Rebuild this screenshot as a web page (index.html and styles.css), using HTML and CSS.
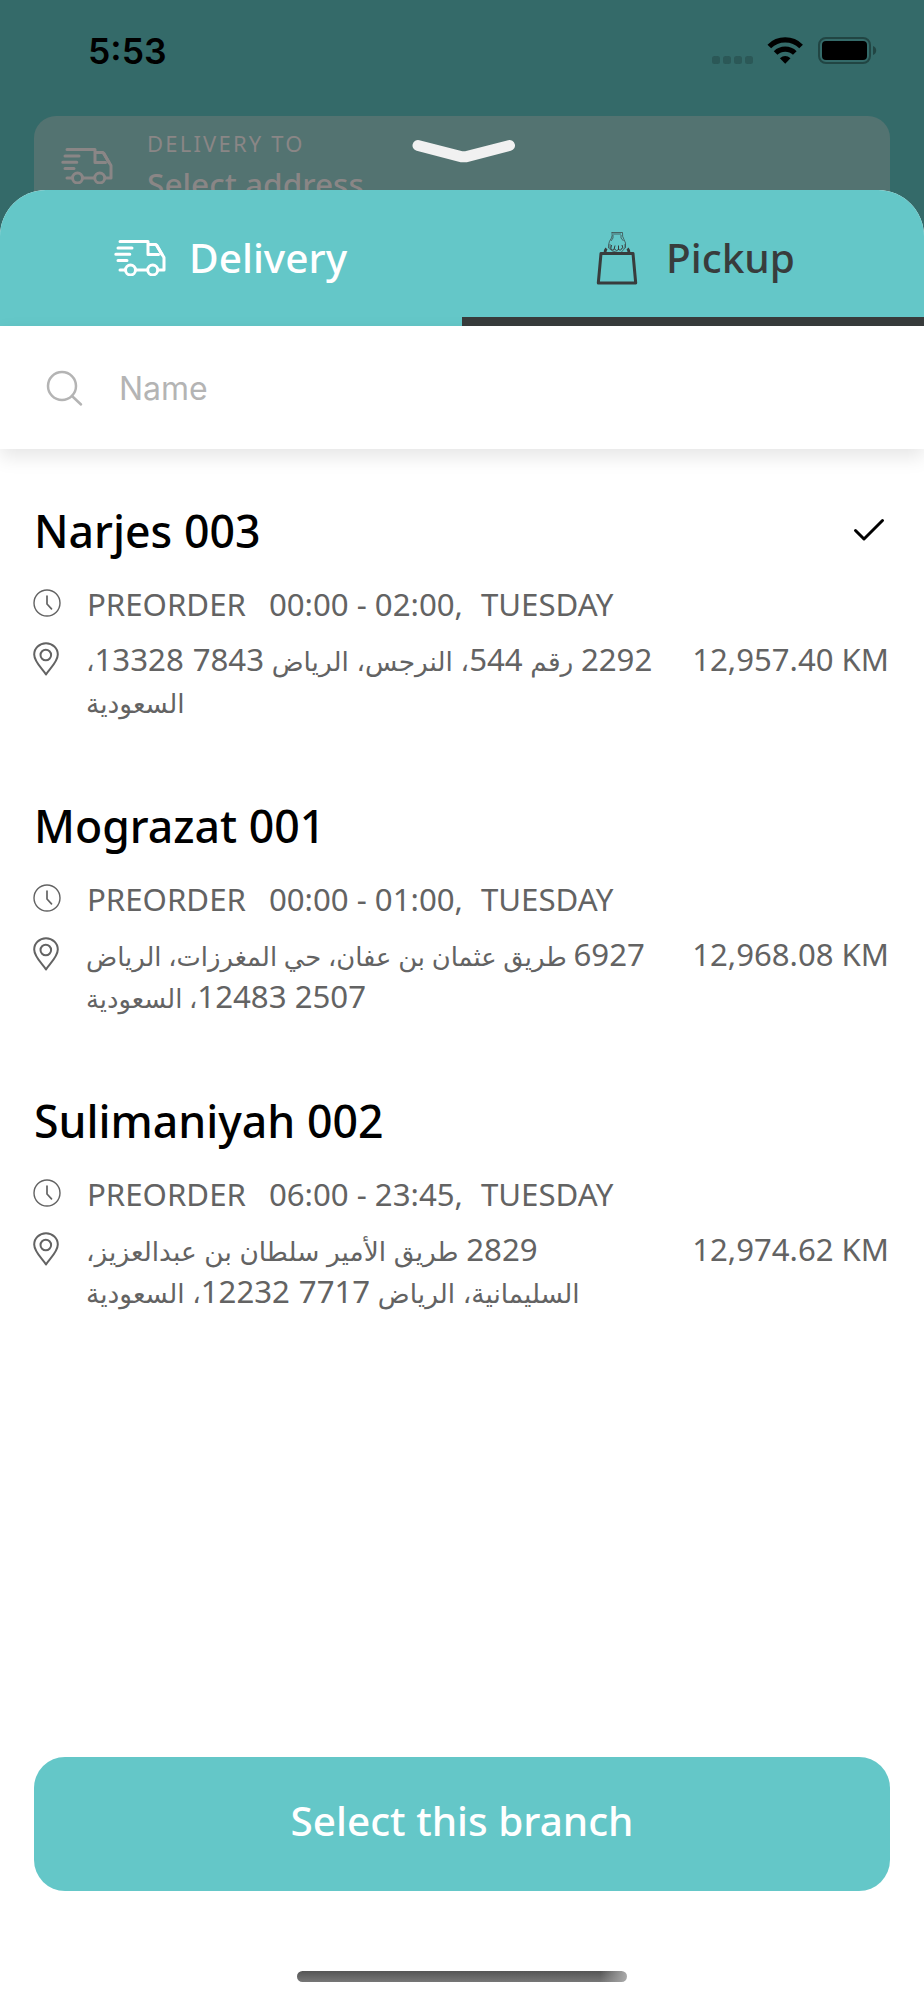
FILE: index.html
```html
<!DOCTYPE html>
<html lang="en">
  <head>
    <meta charset="UTF-8" />
    <meta name="viewport" content="width=device-width, initial-scale=1.0" />
    <title>Select branch</title>
    <link rel="stylesheet" href="styles.css">
  </head>
  <body>
    <svg class="symbols" width="0" height="0">
      <symbol id="truck" viewBox="0 0 52 37">
        <g fill="none" stroke="currentColor" stroke-width="3" stroke-linecap="round" stroke-linejoin="round">
          <path d="M6 2.500h28v13h10.500M34 5.500h8l8 13v12.500h-5M33 31H22M11 31H6M4 9h14M1.800 15.200h14M4 21.600h9" />
          <path d="M43 6.500l5 9" />
          <circle cx="16.500" cy="31" r="5" />
          <circle cx="38.700" cy="31" r="5" />
        </g>
      </symbol>
      <symbol id="clock" viewBox="0 0 28 28">
        <g fill="none" stroke="currentColor" stroke-linecap="round">
          <circle cx="14" cy="14" r="13" stroke-width="1.400" />
          <path d="M14 7v8l4.500 4.800" stroke-width="1.700" />
        </g>
      </symbol>
      <symbol id="pin" viewBox="0 0 26 34">
        <g fill="none" stroke="currentColor" stroke-width="2" stroke-linejoin="round">
          <path d="M13 32.500C10 27.500 1.200 20 1.200 12.500a11.800 11.300 0 0 1 23.600 0C24.800 20 16 27.500 13 32.500z" />
          <circle cx="12.800" cy="13" r="5.300" />
        </g>
      </symbol>
    </svg>

    <div class="screen">
      <div class="backdrop">
        <div class="status-bar">
          <span class="time">5:53</span>
          <svg class="status-icons" width="166" height="30" viewBox="0 0 166 30">
            <g fill="#2b5857">
              <rect x="0" y="20" width="8" height="8" rx="2.500" />
              <rect x="11" y="20" width="8" height="8" rx="2.500" />
              <rect x="22" y="20" width="8" height="8" rx="2.500" />
              <rect x="33" y="20" width="8" height="8" rx="2.500" />
            </g>
            <g fill="none" stroke="#000" stroke-width="5.200">
              <path d="M57.300 10.500a22.600 22.600 0 0 1 31.800 0" />
              <path d="M63.600 17a13.800 13.800 0 0 1 19.200 0" />
            </g>
            <path d="M67.900 22.300q5.300-4.600 10.600 0l-5.300 5.500z" />
            <rect x="107" y="2" width="51" height="25" rx="7" fill="none" stroke="#214543" stroke-width="2" />
            <rect x="110" y="5" width="45" height="19" rx="4" />
            <path d="M161 10q3.200 1.300 3.200 4.500t-3.200 4.500z" fill="#214543" />
          </svg>
        </div>
        <div class="address-card">
          <svg class="truck" width="52" height="37"><use href="#truck" /></svg>
          <div class="address-text">
            <span class="address-label">DELIVERY TO</span>
            <span class="address-value">Select address</span>
          </div>
        </div>
        <svg class="handle" width="104" height="26" viewBox="0 0 104 26">
          <path d="M6 6.500l44 11.300h3.500L97.500 6.500" fill="none" stroke="#f1f1f1" stroke-width="11" stroke-linecap="round" stroke-linejoin="round" />
        </svg>
      </div>

      <div class="sheet">
        <div class="tabs">
          <div class="tab tab-delivery">
            <svg class="truck" width="52" height="37"><use href="#truck" /></svg>
            <span>Delivery</span>
          </div>
          <div class="tab tab-pickup active">
            <svg width="42" height="54" viewBox="0 0 42 54" fill="none" stroke="currentColor">
              <path d="M5 22.500h32l2.700 29.500H2.300z" stroke-width="3" stroke-linejoin="round" />
              <path d="M9 22q0-3 1.500-4.500M33 22q0-3-1.500-4.500" stroke-width="2.800" />
              <path d="M15.500 1.500h11M16 1.500q.5 3-.5 5.500-2.500 3-3 7v3l4 3q5 2 8.500 1.500l4.500-5q.8-5-1.500-8-2-3-1.500-7M17 3h8M14 17v-4M29 17v-4M17 4v3l-2 3M25 4v3l2.500 3" stroke-width=".7" />
              <path d="M15.500 14l-.8 4M19 14.500l-1 4M22.500 14.500v4.500M26 14l1 3.500M15 18q2 2.500 3.500 0 2 3 4 .5 3 1.500 3.500-1.500" stroke-width="1" />
            </svg>
            <span>Pickup</span>
          </div>
        </div>

        <div class="search">
          <svg width="37" height="37" viewBox="0 0 37 37" fill="none" stroke="#b4b4b4" stroke-width="2.500" stroke-linecap="round">
            <circle cx="16" cy="16" r="14" />
            <path d="M26 26l9 8.500" />
          </svg>
          <span>Name</span>
        </div>

        <div class="branches">
          <div class="branch">
            <div class="branch-head">
              <h2>Narjes 003</h2>
              <svg class="check" width="32" height="24" viewBox="0 0 32 24">
                <path d="M2.500 12.500l8.500 8.500L29.500 2.500" fill="none" stroke="#000" stroke-width="3" stroke-linecap="round" stroke-linejoin="round" />
              </svg>
            </div>
            <div class="hours">
              <svg width="28" height="28"><use href="#clock" /></svg>
              <span>PREORDER</span>
              <span class="slot">00:00 - 02:00,</span>
              <span>TUESDAY</span>
            </div>
            <div class="place">
              <svg width="26" height="34"><use href="#pin" /></svg>
              <p class="address loose" dir="rtl"><span class="num">2292</span> رقم <span class="num">544</span>، النرجس، الرياض <span class="num">7843 13328</span>،<br />السعودية</p>
              <span class="distance">12,957.40 KM</span>
            </div>
          </div>

          <div class="branch">
            <div class="branch-head">
              <h2>Mograzat 001</h2>
            </div>
            <div class="hours">
              <svg width="28" height="28"><use href="#clock" /></svg>
              <span>PREORDER</span>
              <span class="slot">00:00 - 01:00,</span>
              <span>TUESDAY</span>
            </div>
            <div class="place">
              <svg width="26" height="34"><use href="#pin" /></svg>
              <p class="address" dir="rtl"><span class="num">6927</span> طريق عثمان بن عفان، حي المغرزات، الرياض<br /><span class="num">2507 12483</span>، السعودية</p>
              <span class="distance">12,968.08 KM</span>
            </div>
          </div>

          <div class="branch">
            <div class="branch-head">
              <h2>Sulimaniyah 002</h2>
            </div>
            <div class="hours">
              <svg width="28" height="28"><use href="#clock" /></svg>
              <span>PREORDER</span>
              <span class="slot">06:00 - 23:45,</span>
              <span>TUESDAY</span>
            </div>
            <div class="place">
              <svg width="26" height="34"><use href="#pin" /></svg>
              <p class="address loose" dir="rtl"><span class="num">2829</span> طريق الأمير سلطان بن عبدالعزيز،<br />السليمانية، الرياض <span class="num">7717 12232</span>، السعودية</p>
              <span class="distance">12,974.62 KM</span>
            </div>
          </div>
        </div>

        <div class="footer">
          <button type="button" class="select-button">Select this branch</button>
          <div class="home-bar"></div>
        </div>
      </div>
    </div>
  </body>
</html>
```

FILE: styles.css
```css
* {
  box-sizing: border-box;
}

body {
  margin: 0;
  font-family: "Noto Sans", "DejaVu Sans", sans-serif;
  background: #346a69;
}

svg {
  display: block;
  flex-shrink: 0;
}

.symbols {
  position: absolute;
}

.screen {
  width: 924px;
  height: 2000px;
  display: flex;
  flex-direction: column;
  overflow: hidden;
}

/* dimmed page behind the sheet */
.backdrop {
  position: relative;
  height: 190px;
  flex-shrink: 0;
}

.status-bar {
  height: 116px;
  padding: 30px 46px 0 88px;
  display: flex;
  justify-content: space-between;
}

.time {
  margin-top: 1px;
  font-family: Inter, sans-serif;
  font-size: 35.5px;
  line-height: 42px;
  font-weight: 600;
}

.status-icons {
  margin-top: 6px;
}

.address-card {
  height: 150px;
  margin: 0 34px;
  padding: 12px 28px 0 27px;
  display: flex;
  gap: 34px;
  border-radius: 22px;
  background: #537371;
  color: #8a8686;
}

.address-card .truck {
  margin-top: 19px;
}

.address-text {
  display: flex;
  flex-direction: column;
}

.address-label {
  font-size: 22px;
  line-height: 30px;
  letter-spacing: 2.2px;
}

.address-value {
  font-size: 31.6px;
  line-height: 42px;
  font-weight: 500;
  margin-top: 5px;
}

.handle {
  position: absolute;
  left: 412px;
  top: 139px;
}

.sheet {
  position: relative;
  flex: 1;
  display: flex;
  flex-direction: column;
  border-radius: 46px 46px 0 0;
  overflow: hidden;
  background: #fff;
}

.tabs {
  display: flex;
  height: 136px;
  background: #64c7c8;
  font-size: 40.6px;
  font-weight: 500;
}

.tab {
  flex: 0 0 50%;
  display: flex;
  align-items: center;
  padding-top: 8px;
  border-bottom: 9px solid transparent;
}

.tab-delivery {
  padding-left: 114px;
  gap: 23px;
  color: #fff;
}

.tab-pickup {
  padding-left: 134px;
  gap: 28px;
  color: #383c3c;
}

.tab.active {
  border-bottom-color: #383c3c;
}

.search {
  height: 123px;
  padding: 1px 46px 0;
  display: flex;
  align-items: center;
  gap: 36px;
  color: #b4b4b4;
  font-family: Inter, sans-serif;
  font-size: 32px;
  box-shadow: 0 8px 18px rgba(0, 0, 0, 0.1);
}

.branches {
  flex: 1;
  padding: 51px 34px 0;
}

.branch {
  height: 295px;
}

.branch-head {
  display: flex;
  justify-content: space-between;
  align-items: center;
  height: 62px;
  padding-right: 5px;
}

.branch-head h2 {
  margin: 0;
  font-size: 44.6px;
  line-height: 62px;
  font-weight: 500;
}

.check {
  margin-bottom: 2px;
}

.hours,
.place {
  display: flex;
  color: #636363;
  font-size: 31.2px;
  line-height: 42px;
}

.hours {
  margin-top: 21px;
  align-items: center;
}

.hours svg {
  margin: 0 26px 3px -1px;
}

.slot {
  margin: 0 18px 0 23px;
}

.place {
  margin-top: 13px;
}

.place svg {
  margin: 4px 0 0 -1px;
}

.address {
  margin: 2px 0 0 27px;
  font-size: 25.8px;
  text-align: left;
  white-space: nowrap;
}

.address.loose {
  font-size: 26.4px;
  word-spacing: 0.8px;
}

.num {
  font-size: 31.2px;
  line-height: 1;
}

.distance {
  margin: 0 1px 0 auto;
  font-size: 31.1px;
  white-space: nowrap;
}

.footer {
  height: 244px;
  padding: 0 34px;
  display: flex;
  flex-direction: column;
  align-items: center;
}

.select-button {
  width: 100%;
  height: 134px;
  margin-top: 1px;
  padding: 0 0 7px;
  border: none;
  border-radius: 31px;
  background: #64c7c8;
  color: #fff;
  font-family: inherit;
  font-size: 40.5px;
  font-weight: 500;
}

.home-bar {
  width: 330px;
  height: 11px;
  margin-top: 80px;
  border-radius: 6px;
  background: linear-gradient(to right, transparent 92%, #aaa), linear-gradient(#555, #777);
}
```
